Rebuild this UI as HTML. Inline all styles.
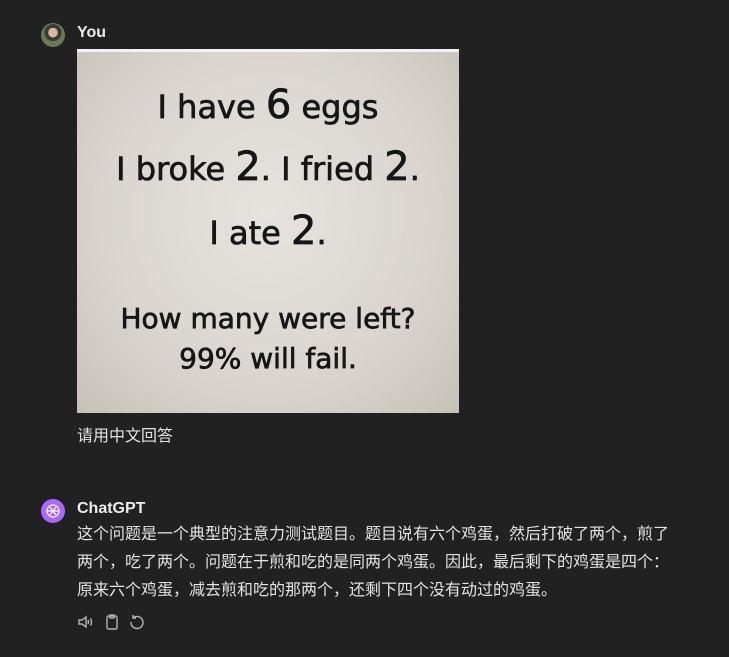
<!DOCTYPE html>
<html><head><meta charset="utf-8"><style>
body{margin:0;background:#212121;width:729px;height:657px;overflow:hidden;font-family:"Liberation Sans","Noto Sans CJK SC",sans-serif;color:#ececec;position:relative}
.av{position:absolute;left:41px;width:24px;height:24px;border-radius:50%}
.name{position:absolute;left:77px;font-weight:bold;font-size:16px}
.img{position:absolute;left:77px;top:49px;width:382px;height:364px;background:radial-gradient(ellipse at 50% 45%,#e6e3de 0%,#d9d5ce 60%,#c6c1b8 100%);border-top:3px solid #f2f2f2;box-sizing:border-box;color:#161616;font-family:"DejaVu Sans",sans-serif;text-align:center;-webkit-text-stroke:0.7px #161616}
.img div{position:absolute;left:0;right:0}
.t{position:absolute;left:77px;font-size:16px;line-height:28px;color:#e3e3e3;white-space:nowrap}
</style></head><body>
<div class="av" style="top:23px;background:radial-gradient(circle at 50% 40%,#d8b89a 0 25%,#3a3a3a 26% 45%,#6a7a55 46%)"></div>
<div class="name" style="top:24px">You</div>
<div class="img">
<div style="top:30px;font-size:32px">I have <span style="font-size:40px">6</span> eggs</div>
<div style="top:92px;font-size:32px">I broke <span style="font-size:40px">2</span>. I fried <span style="font-size:40px">2</span>.</div>
<div style="top:156px;font-size:32px">I ate <span style="font-size:40px">2</span>.</div>
<div style="top:250px;font-size:28px">How many were left?</div>
<div style="top:290px;font-size:28px">99% will fail.</div>
</div>
<div class="t" style="top:423px">请用中文回答</div>
<div class="av" style="top:499px;background:#ab68ff;display:flex;align-items:center;justify-content:center"><svg width="16" height="16" viewBox="0 0 16 16" fill="none" stroke="#fff" stroke-width="1.2"><circle cx="8" cy="8" r="6"/><path d="M5 4l6 8M11 4l-6 8M2 8h12"/></svg></div>
<div class="name" style="top:500px">ChatGPT</div>
<div class="t" style="top:521px">这个问题是一个典型的注意力测试题目。题目说有六个鸡蛋，然后打破了两个，煎了<br>两个，吃了两个。问题在于煎和吃的是同两个鸡蛋。因此，最后剩下的鸡蛋是四个：<br>原来六个鸡蛋，减去煎和吃的那两个，还剩下四个没有动过的鸡蛋。</div>
<svg style="position:absolute;left:77px;top:613px" width="72" height="18" viewBox="0 0 72 18" fill="none" stroke="#b4b4b4" stroke-width="1.4">
<path d="M2 7h3l4-3v10l-4-3H2z"/><path d="M11 7q1 2 0 4M13.5 5.5q2 3.5 0 7"/>
<rect x="30" y="3" width="10" height="13" rx="1.5"/><rect x="33" y="2" width="4" height="3"/>
<path d="M56 5a6 6 0 1 1-2 4M56 2v3h3"/>
</svg>
</body></html>
